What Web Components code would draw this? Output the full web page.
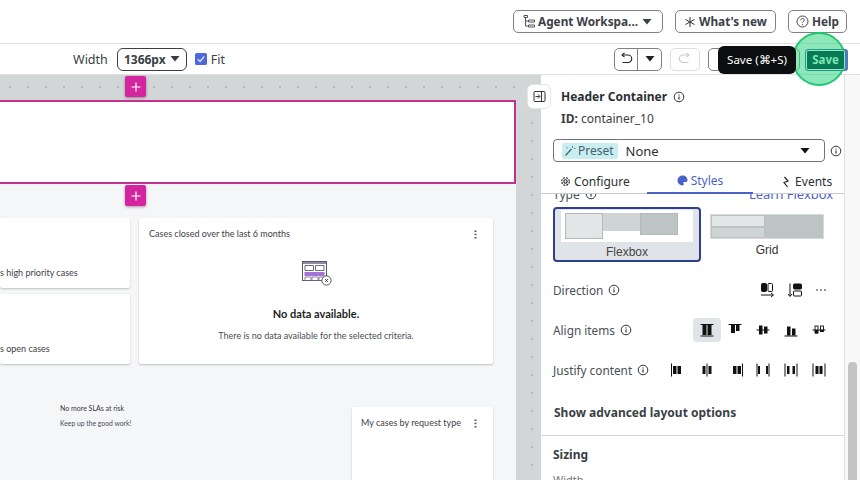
<!DOCTYPE html>
<html><head><meta charset="utf-8"><title>Builder</title>
<style>
html,body{margin:0;height:480px;overflow:hidden;background:#fff;font-family:"Noto Sans","Open Sans",sans-serif;color:#3a3f45}
</style></head><body>
<app-shell></app-shell>
<script>
const ICONS={
 tree:'<svg width="12" height="13" viewBox="0 0 12 13" fill="none" stroke="#444" stroke-width=".9"><path d="M1 .5h3.500v2H1zM5.500 5h6v2h-6zM5.500 10h6v2h-6zM2.500 2.500V11h3M2.500 6h3"/></svg>',
 caret:'<svg width="10" height="6" viewBox="0 0 10 6"><path d="M.5 0h9L5 5.500z" fill="currentColor"/></svg>',
 spark:'<svg width="12" height="12" viewBox="0 0 12 12" stroke="#333" stroke-width="1" fill="none"><path d="M6 1v10M1.500 3.500l9 5M10.500 3.500l-9 5"/></svg>',
 help:'<svg width="13" height="13" viewBox="0 0 13 13" fill="none" stroke="#444"><circle cx="6.500" cy="6.500" r="5.500"/><path d="M4.800 5.200c0-2.200 3.500-2.200 3.500-.2 0 1.300-1.800 1.300-1.800 2.700"/><circle cx="6.500" cy="9.600" r=".3"/></svg>',
 info:'<svg width="12" height="12" viewBox="0 0 12 12" fill="none" stroke="#333"><circle cx="6" cy="6" r="4.800"/><path d="M6 5.400v3" stroke-width="1.200"/><path d="M6 3.400v1.100" stroke-width="1.200"/></svg>',
 undo:'<svg width="14" height="14" viewBox="0 0 14 14" fill="none" stroke="currentColor" stroke-width="1.100"><path d="M4 3h5a3.300 3.300 0 0 1 0 7.500H3.500"/><path d="M5.500 1L3 3l2.500 2.200"/></svg>',
 redo:'<svg width="14" height="14" viewBox="0 0 14 14" fill="none" stroke="currentColor" stroke-width="1.100"><path d="M10 3H5a3.300 3.300 0 0 0 0 7.500h5.500"/><path d="M8.500 1L11 3 8.500 5.200"/></svg>',
 panel:'<svg width="13" height="13" viewBox="0 0 13 13" fill="none" stroke="#333"><rect x="1" y="1.500" width="11" height="10" rx="1"/><path d="M8.500 1.500v10M2.500 6.500h4M5 4.500l2 2-2 2"/></svg>',
 wand:'<svg width="12" height="12" viewBox="0 0 12 12" fill="none" stroke="#4a6670" stroke-width="1.300"><path d="M1.500 10.500l6-6.500"/><path d="M8.500 1v2M10 3.500h1.500M3 2v1.500" stroke-width=".8"/></svg>',
 gear:'<svg width="11" height="11" viewBox="0 0 11 11" fill="none" stroke="#222" stroke-width="1.100"><circle cx="5.500" cy="5.500" r="1.700"/><circle cx="5.500" cy="5.500" r="3.800" stroke-dasharray="2 1"/></svg>',
 palette:'<svg width="11" height="11" viewBox="0 0 11 11"><path d="M5.500.5a5 5 0 1 0 0 10c1.500 0 1.400-1.300 1-2-.4-.8.200-1.500 1-1.500h1.300c1 0 1.700-.8 1.700-1.800C10.500 2.300 8.300.5 5.500.5z" fill="#4a63c9"/></svg>',
 bolt:'<svg width="10" height="12" viewBox="0 0 10 12" fill="none" stroke="#222" stroke-width="1.200"><path d="M3.500 1l3.500 4-4 1.500L6.500 11"/></svg>',
 check:'<svg width="12" height="12" viewBox="0 0 12 12"><rect width="12" height="12" rx="1.500" fill="#4f69dc"/><path d="M2.800 6.200l2.200 2.300 4.200-5" fill="none" stroke="#dfe6ff" stroke-width="1.200"/></svg>',
 plus:'<svg width="10" height="10" viewBox="0 0 10 10" stroke="#fff" stroke-width="1.200"><path d="M5 .5v9M.5 5h9"/></svg>',
 kebab:'<svg width="3" height="9" viewBox="0 0 3 9" fill="#555"><rect x=".5" y=".5" width="2" height="1.500"/><rect x=".5" y="3.700" width="2" height="1.500"/><rect x=".5" y="7" width="2" height="1.500"/></svg>',
 empty:'<svg width="30" height="27" viewBox="0 0 30 27" fill="none"><rect x=".5" y="1.500" width="24" height="19" fill="#fff" stroke="#5a5570"/><rect x="1" y="2" width="23" height="2" fill="#8f8ba0"/><path d="M3 5.500h8.500v5H3zM13.500 5.500h8.500v5h-8.500z" stroke="#4a4560" stroke-width=".8"/><rect x="2.500" y="12" width="20" height="4" fill="#a472d8"/><path d="M3 17h6v3.500H3zM10 17h6v3.500h-6zM17 17h5v3.500h-5z" stroke="#6a6580" stroke-width=".8"/><circle cx="24.500" cy="20.500" r="4.600" fill="#fff" stroke="#444" stroke-width=".9"/><path d="M23.200 19.200l2.600 2.600M25.800 19.200l-2.600 2.600" stroke="#222" stroke-width=".9"/></svg>',
 dirRow:'<svg width="16" height="16" viewBox="0 0 16 16" fill="none" stroke="#111"><rect x="2.500" y="1.500" width="5" height="8" rx="1" fill="#111"/><rect x="9" y="1.500" width="4.500" height="8" rx="1"/><path d="M2 13h12M12 11l2.500 2-2.500 2"/></svg>',
 dirCol:'<svg width="16" height="16" viewBox="0 0 16 16" fill="none" stroke="#111"><rect x="6.500" y="2" width="8" height="5" rx="1" fill="#111"/><rect x="6.500" y="9" width="8" height="5" rx="1"/><path d="M3 1.500v12.500M1 12l2 2.500L5 12"/></svg>',
 dots:'<svg width="10" height="3" viewBox="0 0 10 3" fill="#999"><rect width="2" height="2"/><rect x="4" width="2" height="2"/><rect x="8" width="2" height="2"/></svg>',
 aBase:'<svg width="16" height="16" viewBox="0 0 16 16"><rect x="4" y="4" width="3" height="7" fill="#fff" stroke="#111" stroke-width=".9"/><rect x="9.500" y="4" width="3" height="5.500" fill="#fff" stroke="#111" stroke-width=".9"/><rect x="4" y="8" width="3" height="3.500" fill="#111"/><rect x="9.500" y="8" width="3" height="1.800" fill="#111"/><path d="M1.500 8h13" stroke="#111"/></svg>'
};
function bars(lines,rects){
 return '<svg width="16" height="16" viewBox="0 0 16 16">'+lines.map(l=>`<path d="${l}" stroke="#111" fill="none"/>`).join('')+
  rects.map(r=>`<rect x="${r[0]}" y="${r[1]}" width="${r[2]}" height="${r[3]}" fill="#111"/>`).join('')+'</svg>';
}
Object.assign(ICONS,{
 aStretch:bars(['M1.500 14h13','M1.500 2.500h13'],[[3.500,3,4,10],[8.500,3,4,10]]),
 aStart:bars(['M1.500 2.500h13'],[[4,3,4,8],[9,3,3.500,6]]),
 aCenter:bars(['M1.500 8h13'],[[4,3.500,3.500,9],[9,4.500,3.500,7]]),
 aEnd:bars(['M1.500 14h13'],[[4,4.500,3.500,9],[9,6.500,3.500,7]]),
 jStart:bars(['M2.500 1.500v13'],[[4,4,3.500,8],[8.500,4,3.500,8]]),
 jCenter:bars(['M8 1.500v13'],[[3.500,4,3,8],[9.500,4,3,8]]),
 jEnd:bars(['M13.500 1.500v13'],[[4,4,3.500,8],[8.500,4,3.500,8]]),
 jAround:bars(['M2 1.500v13','M14 1.500v13'],[[3,4,2,8],[11,4,2,8]]),
 jBetween:bars(['M2 1.500v13','M14 1.500v13'],[[4,4,2.500,8],[9.500,4,2.500,8]]),
 jEven:bars(['M2 1.500v13','M14 1.500v13'],[[4.500,4,3,8],[8.500,4,3,8]])
});
class Base extends HTMLElement{
 constructor(){super();this.attachShadow({mode:'open'}).innerHTML=this.html();}
 html(){return '<slot></slot>'}
}
class UiIcon extends Base{
 connectedCallback(){this.shadowRoot.innerHTML='<style>:host{display:inline-flex;align-items:center;justify-content:center;flex:none;line-height:0}</style>'+(ICONS[this.getAttribute('name')]||'');}
}
class TopBtn extends Base{
 html(){return `<style>:host{display:inline-flex;align-items:center;gap:3px;box-sizing:border-box;height:23px;padding:0 0 0 9px;border:1px solid #7d8287;border-radius:5px;font:700 11.800px/1 "Noto Sans",sans-serif;color:#3c4147;white-space:nowrap}</style><slot></slot>`}
}
class TopBar extends Base{
 html(){return `<style>:host{display:flex;box-sizing:border-box;height:44px;border-bottom:1px solid #dfe1e3;padding:10px 13px 0 0;justify-content:flex-end;gap:12px;background:#fff}</style>
 <top-btn style="width:150px"><ui-icon name="tree"></ui-icon><span>Agent Workspa...</span><ui-icon name="caret" style="margin-left:1px"></ui-icon></top-btn>
 <top-btn style="width:101px;padding-left:8px"><ui-icon name="spark"></ui-icon><span>What's new</span></top-btn>
 <top-btn style="width:59px;padding-left:7px"><ui-icon name="help"></ui-icon><span>Help</span></top-btn>`}
}
class ToolBar extends Base{
 html(){return `<style>
 :host{display:flex;position:relative;box-sizing:border-box;height:31px;align-items:center;background:#fff;padding-left:73px;border-bottom:1px solid #dfe1e3;font-size:12.500px;color:#3a3f45}
 .sel{display:flex;align-items:center;justify-content:center;gap:4px;box-sizing:border-box;width:70px;height:23px;margin-left:9px;border:1px solid #3a3f45;border-radius:6px;font-weight:700;font-size:12px}
 .chk{display:flex;align-items:center;margin-left:8px;gap:4px}
 .right{display:flex;margin-left:auto;padding-right:60px;gap:8px;align-items:center}
 .b{box-sizing:border-box;height:23px;border:1px solid #7d8287;border-radius:5px;display:flex;align-items:center;justify-content:center;background:#fff}
 .undo{width:48px;color:#222}.undo span{flex:1;display:flex;align-items:center;justify-content:center;height:100%}.undo span+span{border-left:1px solid #7d8287;flex:0 0 23px}
 .redo{width:30px;border-color:#dcdfe1;color:#c8cbcd}
 .ghost{width:92px}
 .save{box-sizing:border-box;width:39px;height:20px;background:#067a55;border:1px solid #9be6c2;outline:1px solid #1f9c8c;border-radius:2px;color:#7de6b6;font:700 11.500px/18px "Noto Sans",sans-serif;text-align:center;box-shadow:2px 0 0 1px #5a6fd0;position:absolute;left:806px;top:6px;z-index:2}
 .spot{position:absolute;left:792px;top:-12px;width:54px;height:54px;box-sizing:border-box;border-radius:50%;background:rgba(46,214,125,.55);border:2px solid #21c873;z-index:1}
 .tip{position:absolute;left:718px;top:2px;width:78px;height:28px;background:#0d0e10;border-radius:6px;color:#fff;font-size:11.500px;line-height:27px;text-align:center;z-index:3;white-space:nowrap}
 </style>
 <span>Width</span>
 <div class="sel"><span>1366px</span><ui-icon name="caret"></ui-icon></div>
 <div class="chk"><ui-icon name="check"></ui-icon><span>Fit</span></div>
 <div class="right"><div class="b undo"><span><ui-icon name="undo"></ui-icon></span><span><ui-icon name="caret"></ui-icon></span></div>
 <div class="b redo"><ui-icon name="redo"></ui-icon></div><div class="b ghost"></div></div>
 <div class="spot"></div><div class="tip">Save (⌘+S)</div>
 <div class="save">Save</div>`}
}
class AddBtn extends Base{
 html(){return `<style>:host{display:flex;align-items:center;justify-content:center;width:21px;height:21px;background:#d3259f;border-radius:2px;box-shadow:0 1px 3px rgba(80,0,60,.4)}</style><ui-icon name="plus"></ui-icon>`}
}
class DashCard extends Base{
 html(){return `<style>:host{display:flex;flex-direction:column;box-sizing:border-box;position:relative;background:#fff;border-radius:2px;box-shadow:0 1px 2px rgba(0,0,0,.22);font-family:Lato,sans-serif;color:#3d4148;overflow:hidden}
 .t{display:var(--k,flex);justify-content:space-between;align-items:center;font-size:9px;padding:9px 16px 0 var(--tl,10px);line-height:14px}</style><div class="t"><slot name="title"></slot><ui-icon name="kebab"></ui-icon></div><slot></slot>`}
}
class BuildCanvas extends Base{
 html(){return `<style>
 :host{display:block;position:relative;width:541px;height:405px;flex:none;overflow:hidden;background-color:#d2d6d6;background-image:radial-gradient(circle,#b4b9b9 .8px,transparent 1px);background-size:18px 18px;background-position:1px 3px}
 .in{width:516px;display:flex;flex-direction:column;height:405px}
 .band{height:25px;flex:none;box-sizing:border-box;padding:1px 0 0 125px}
 .sel{height:84px;flex:none;box-sizing:border-box;background:#fff;border:2px solid #c1318f;border-left:0}
 .page{flex:1;min-height:0;background:#f5f6f8;display:flex;flex-direction:column;overflow:hidden}
 .add{height:34px;flex:none;box-sizing:border-box;padding:1px 0 0 125px}
 .grid{display:grid;flex:none;grid-template-columns:130px 354px;grid-template-rows:70px 70px;column-gap:9px;row-gap:6px}
 .cap{margin-top:auto;padding-bottom:8px;font-size:9px;line-height:14px}
 .big{grid-column:2;grid-row:1/3}
 .mid{display:flex;flex-direction:column;align-items:center}
 .ill{margin-top:19px;margin-left:2px;line-height:0}
 h4{margin:19px 0 0;font:700 11px/16px Lato,sans-serif;color:#1c1f23}
 p{margin:7px 0 0;font:9px/14px Lato,sans-serif;color:#4a4e55}
 .bottom{display:flex;flex:none;justify-content:space-between;align-items:flex-start;padding:43px 23px 0 60px;font-family:Lato,sans-serif}
 .msg{font-size:7px;line-height:10px;color:#33373c;margin-top:-4px}.msg div+div{margin-top:5px;color:#4a4e55;font-size:6.800px}
 .mini{width:141px;height:90px;--tl:9px}
 </style>
 <div class="in">
  <div class="band"><add-btn></add-btn></div>
  <div class="sel"></div>
  <div class="page">
   <div class="add"><add-btn></add-btn></div>
   <div class="grid">
    <dash-card style="--k:none"><div class="cap">s high priority cases</div></dash-card>
    <dash-card class="big"><span slot="title">Cases closed over the last 6 months</span>
     <div class="mid"><div class="ill"><ui-icon name="empty"></ui-icon></div><h4>No data available.</h4><p>There is no data available for the selected criteria.</p></div></dash-card>
    <dash-card style="--k:none"><div class="cap">s open cases</div></dash-card>
   </div>
   <div class="bottom"><div class="msg"><div>No more SLAs at risk</div><div>Keep up the good work!</div></div>
    <dash-card class="mini"><span slot="title">My cases by request type</span></dash-card></div>
  </div>
 </div>`}
}
class LayoutRow extends Base{
 html(){return `<style>:host{display:flex;align-items:center;height:24px;font-size:11.800px;color:#4a4f55;position:relative}
 .l{display:flex;align-items:center;gap:5px}.r{margin-left:auto;margin-right:-1px;display:flex;align-items:center}</style>
 <div class="l"><slot name="label"></slot><ui-icon name="info"></ui-icon></div><div class="r"><slot></slot></div>`}
}
class SidePanel extends Base{
 html(){return `<style>
 :host{display:flex;flex:1;min-width:0;height:405px;background:#fff;position:relative}
 .main{width:304px;box-sizing:border-box;height:405px;border-right:1px solid #dcdfe1;display:flex;flex-direction:column;overflow:hidden}
 .bar{flex:1;background:#f8f8f9;padding:287px 3px 0 3px;box-sizing:border-box;height:405px}
 .thumb{height:118px;background:#c4c4c4;border-radius:4px 4px 0 0}
 .h{padding:13px 0 0 20px;font-size:12px;color:#3a3f45;height:56px;box-sizing:border-box;flex:none}
 .ht{display:flex;align-items:center;gap:6px;font-weight:700;line-height:18px;color:#2b2f33}
 .id{margin-top:4px;line-height:18px}
 .pick{display:flex;align-items:center;margin-left:12px;width:272px;height:23px;box-sizing:border-box;border:1px solid #6f7479;border-radius:4px;padding:0 14px 0 8px;color:#2b2f33;font-size:13px}
 .chip{display:flex;align-items:center;gap:2px;background:#c9eef2;border-radius:2px;height:16px;padding:0 4px 0 2px;font-size:12px;color:#46616b;margin-right:8px}
 .pr{display:flex;align-items:center;gap:5px;margin-top:8px;flex:none}
 .tabs{display:flex;margin-top:7px;height:25px;box-sizing:border-box;font-size:12px;border-bottom:1px solid #c9cdd1;color:#2b2f33;flex:none}
 .tab{display:flex;align-items:center;justify-content:center;gap:3px;height:25px;box-sizing:border-box}
 .tab.on{color:#4a63c9;border-bottom:2px solid #4a63c9;width:107px}
 .sc{flex:1;min-height:0;overflow:hidden;padding:0 12px}
 .type{display:flex;align-items:center;margin-top:-7px;height:14px;font-size:12px;color:#4a4f55;gap:5px}
 .type a{margin-left:auto;color:#4a63c9;font-size:12.900px;margin-right:-1px}
 .opts{display:flex;margin-top:6px;gap:10px}
 .fx{width:148px;height:55px;box-sizing:border-box;border:2px solid #2f3f8f;border-radius:4px;background:#e0e4e8;font:12px/21px "Liberation Sans",sans-serif;text-align:center;color:#444}
 .fx .w{display:block;margin:1px 6px 0;height:32px;background:#fff;padding:3px 4px;box-sizing:border-box}
 .thumbs{display:flex;align-items:flex-start}
 .thumbs i{display:block;box-sizing:border-box;border:1px solid #b3b8b8}
 .gr{width:112px;font:12px/22px "Liberation Sans",sans-serif;text-align:center;color:#333;padding-top:8px}
 .gg{display:grid;grid-template-columns:54px 58px;grid-template-rows:12px 11px;height:23px;margin-bottom:1px;outline:1px solid #d8dcdc}
 .gg i{display:block;box-sizing:border-box;border:1px solid #bcc2c2}
 .rows{margin-top:16px;display:flex;flex-direction:column;gap:16px}
 .act{background:#e0e4e8;border-radius:4px}
 .c{width:28px;height:24px;display:flex;align-items:center;justify-content:center}
 .adv{font-weight:700;font-size:12px;color:#3a3f45;margin-top:22px;line-height:18px;padding-left:1px}
 hr{margin:13px -12px 0;border:0;border-top:1px solid #d4d7da}
 .siz{font-weight:700;font-size:12px;color:#3a3f45;margin-top:10px;line-height:18px}
 .w2{font-size:11px;color:#777;margin-top:9px;line-height:14px}
 </style>
 <div class="main">
  <div class="h"><div class="ht"><span>Header Container</span><ui-icon name="info"></ui-icon></div><div class="id"><b>ID:</b> container_10</div></div>
  <div class="pr"><div class="pick"><span class="chip"><ui-icon name="wand"></ui-icon><span>Preset</span></span><span>None</span><ui-icon name="caret" style="margin-left:auto;color:#111"></ui-icon></div><ui-icon name="info"></ui-icon></div>
  <div class="tabs"><div class="tab" style="width:106px;padding-left:2px"><ui-icon name="gear"></ui-icon><span>Configure</span></div>
   <div class="tab on"><ui-icon name="palette"></ui-icon><span>Styles</span></div>
   <div class="tab" style="width:91px;gap:4px;padding-left:16px"><ui-icon name="bolt"></ui-icon><span>Events</span></div></div>
  <div class="sc">
   <div class="type"><span>Type</span><ui-icon name="info"></ui-icon><a>Learn Flexbox</a></div>
   <div class="opts">
    <div class="fx"><span class="w"><span class="thumbs"><i style="width:38px;height:26px;background:#e3e6e6"></i><i style="width:37px;height:18px;background:#cfd5d5;border-width:0"></i><i style="width:38px;height:22px;background:#bdc4c4"></i></span></span>Flexbox</div>
    <div class="gr"><div class="gg"><i style="background:#e3e6e6;grid-column:1;grid-row:1"></i><i style="background:#bdc4c4;grid-column:2;grid-row:1/3"></i><i style="background:#cfd5d5;grid-column:1;grid-row:2"></i></div>Grid</div>
   </div>
   <div class="rows">
    <layout-row><span slot="label">Direction</span><ui-icon name="dirRow" style="margin-right:12px"></ui-icon><ui-icon name="dirCol" style="margin-right:13px"></ui-icon><ui-icon name="dots" style="margin-right:7px"></ui-icon></layout-row>
    <layout-row><span slot="label">Align items</span><div class="c act"><ui-icon name="aStretch"></ui-icon></div><div class="c"><ui-icon name="aStart"></ui-icon></div><div class="c"><ui-icon name="aCenter"></ui-icon></div><div class="c"><ui-icon name="aEnd"></ui-icon></div><div class="c"><ui-icon name="aBase"></ui-icon></div></layout-row>
    <layout-row><span slot="label">Justify content</span><ui-icon name="jStart"></ui-icon><ui-icon name="jCenter" style="margin-left:14px"></ui-icon><ui-icon name="jEnd" style="margin-left:14px"></ui-icon><ui-icon name="jAround" style="margin-left:10px"></ui-icon><ui-icon name="jBetween" style="margin-left:12px"></ui-icon><ui-icon name="jEven" style="margin-left:12px;margin-right:6px"></ui-icon></layout-row>
   </div>
   <div class="adv">Show advanced layout options</div>
   <hr>
   <div class="siz">Sizing</div>
   <div class="w2">Width</div>
  </div>
 </div>
 <div class="bar"><div class="thumb"></div></div>`}
}
class AppShell extends Base{
 html(){return `<style>:host{display:flex;flex-direction:column;width:860px;height:480px;overflow:hidden;position:relative}
 .m{display:flex;height:405px}
 .col{position:absolute;left:527px;top:84px;width:24px;height:25px;box-sizing:border-box;background:#fff;border:1px solid #e3e5e7;border-radius:6px;display:flex;align-items:center;justify-content:center;z-index:4}</style>
 <top-bar></top-bar><tool-bar></tool-bar><div class="m"><build-canvas></build-canvas><side-panel></side-panel></div><div class="col"><ui-icon name="panel"></ui-icon></div>`}
}
[['ui-icon',UiIcon],['top-btn',TopBtn],['top-bar',TopBar],['tool-bar',ToolBar],['add-btn',AddBtn],['dash-card',DashCard],['build-canvas',BuildCanvas],['layout-row',LayoutRow],['side-panel',SidePanel],['app-shell',AppShell]].forEach(([n,c])=>customElements.define(n,c));
</script>
</body></html>
